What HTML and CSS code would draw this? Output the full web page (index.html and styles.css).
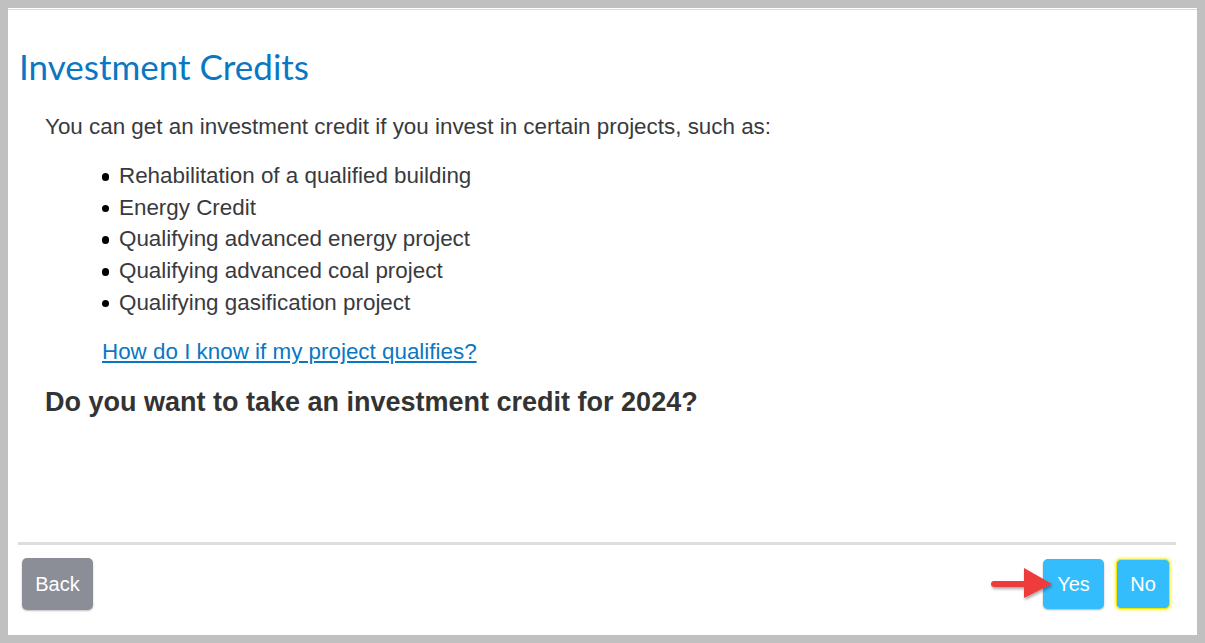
FILE: index.html
```html
<!DOCTYPE html>
<html>
<head>
<meta charset="utf-8">
<link rel="stylesheet" href="styles.css">
</head>
<body>
<div class="panel">
  <main class="content">
    <h1 class="title">Investment Credits</h1>
    <div class="body">
      <p class="intro">You can get an investment credit if you invest in certain projects, such as:</p>
      <ul class="list">
        <li>Rehabilitation of a qualified building</li>
        <li>Energy Credit</li>
        <li>Qualifying advanced energy project</li>
        <li>Qualifying advanced coal project</li>
        <li>Qualifying gasification project</li>
      </ul>
      <p class="help"><a href="#">How do I know if my project qualifies?</a></p>
      <h2 class="question">Do you want to take an investment credit for 2024?</h2>
    </div>
  </main>
  <footer class="footer">
    <div class="sep"></div>
    <div class="actions">
      <button class="btn back">Back</button>
      <div class="right">
        <div class="yes-wrap">
          <svg class="arrow" width="66" height="40" viewBox="0 0 66 40">
            <defs>
              <filter id="sh" x="-20%" y="-30%" width="140%" height="160%">
                <feDropShadow dx="1" dy="2" stdDeviation="1.5" flood-color="#000" flood-opacity="0.35"/>
              </filter>
            </defs>
            <g filter="url(#sh)" fill="#ee3b3b">
              <rect x="3" y="17" width="40" height="6" rx="3"/>
              <polygon points="36,4 64,20 36,34"/>
            </g>
          </svg>
          <button class="btn yes">Yes</button>
        </div>
        <button class="btn no">No</button>
      </div>
    </div>
  </footer>
</div>
</body>
</html>
```
FILE: styles.css
```css
html, body {
  margin: 0;
  padding: 0;
}
body {
  background: #c0c0c0;
  padding: 8px;
  height: 643px;
  box-sizing: border-box;
  font-family: "Liberation Sans", Arial, sans-serif;
  color: #393a3d;
}
.panel {
  background: #fff;
  height: 627px;
  display: flex;
  flex-direction: column;
  border-top: 1px solid #fff;
  box-sizing: border-box;
}
.panel::before {
  content: "";
  display: block;
  height: 1px;
  background: #d9d9d9;
}
.content {
  flex: 1;
  padding: 0 11px;
}
.title {
  font-family: Lato, "Open Sans", sans-serif;
  font-weight: 400;
  font-size: 35px;
  color: #0a77c4;
  margin: 35px 0 0 0;
  line-height: 42px;
}
.body {
  padding-left: 26px;
  font-size: 22.4px;
  line-height: 26px;
}
.intro {
  margin: 27px 0 0 0;
}
.list {
  margin: 20px 0 0 0;
  padding-left: 74px;
  line-height: 31.7px;
}
.list li {
  list-style: none;
  position: relative;
}
.list li::before {
  content: "";
  position: absolute;
  left: -17.5px;
  top: 13px;
  width: 7.5px;
  height: 7.5px;
  border-radius: 50%;
  background: #000;
}
.help {
  margin: 20px 0 0 57px;
}
.help a {
  color: #0a77c4;
  text-decoration: underline;
}
.question {
  font-size: 27px;
  font-weight: 700;
  margin: 22px 0 0 0;
  line-height: 31px;
  color: #333;
}
.footer {
  padding: 0 21px 25px 10px;
}
.sep {
  height: 3px;
  background: #dedede;
  margin-bottom: 13px;
}
.actions {
  display: flex;
  justify-content: space-between;
  align-items: center;
  padding: 0 6px 0 4px;
}
.right {
  display: flex;
  gap: 12px;
  align-items: center;
}
.yes-wrap {
  position: relative;
}
.arrow {
  position: absolute;
  left: -55px;
  top: 5px;
  z-index: 1;
}
.btn {
  font-family: "Liberation Sans", Arial, sans-serif;
  font-size: 20px;
  color: #fff;
  border: none;
  border-radius: 5px;
  height: 50px;
  padding: 0;
  cursor: pointer;
}
.back {
  width: 71px;
  height: 52px;
  background: #8b8e96;
  box-shadow: 0 1px 2px rgba(0,0,0,0.25);
}
.yes {
  width: 61px;
  background: #33bdfd;
  box-shadow: 0 1px 2px rgba(0,0,0,0.3);
}
.no {
  width: 54px;
  background: #33bdfd;
  border: 1px solid #f5e400;
  box-shadow: 0 0 3px 1px rgba(255,235,0,0.75);
}
```
